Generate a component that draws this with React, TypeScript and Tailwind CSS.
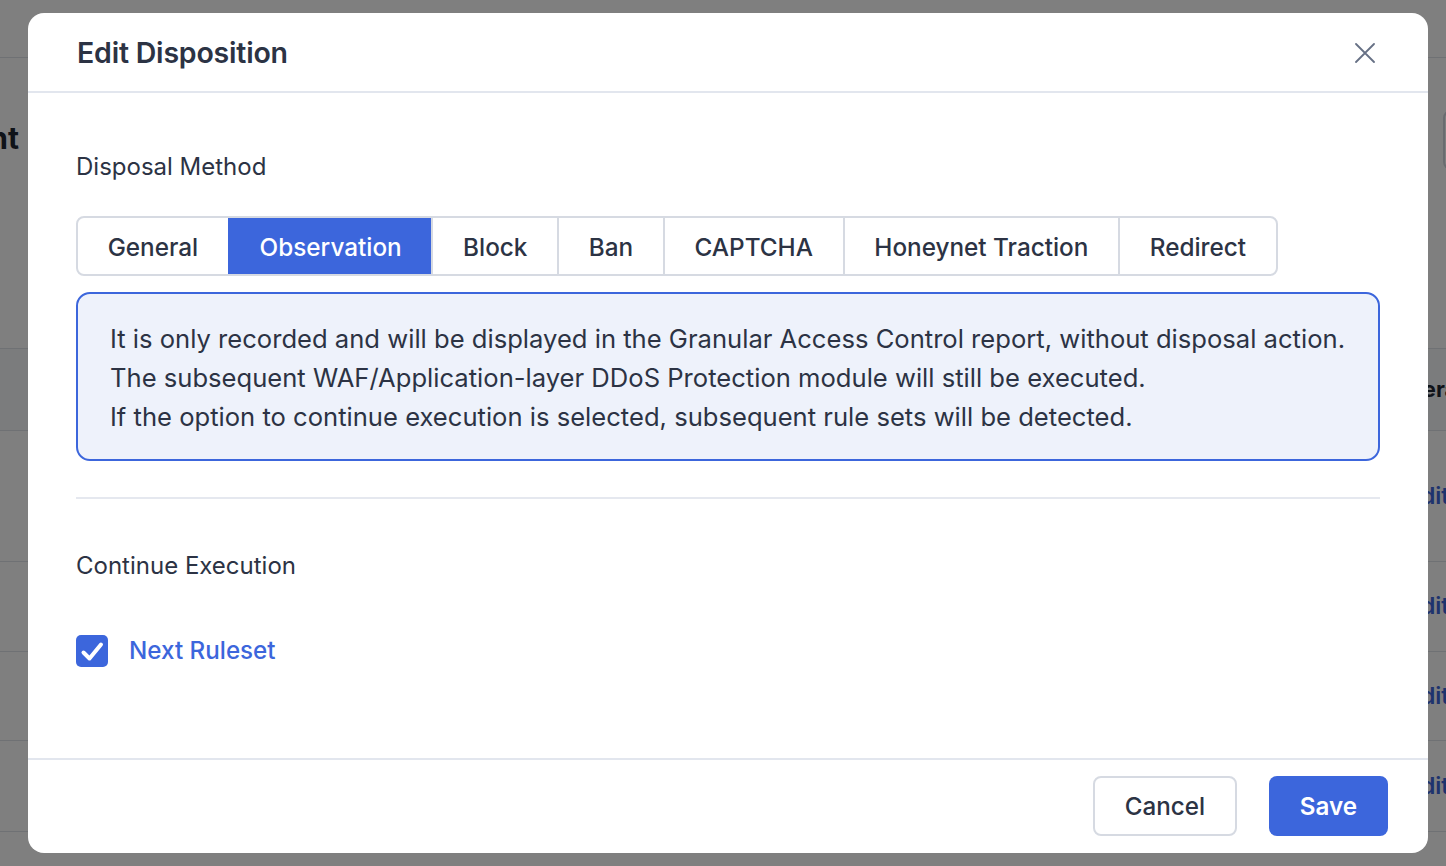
import React from "react";

const tabs = ["General", "Observation", "Block", "Ban", "CAPTCHA", "Honeynet Traction", "Redirect"];

function Background() {
  return (
    <div className="w-[1446px] h-[866px] overflow-hidden bg-white text-[#1f2633] whitespace-nowrap">
      <div className="h-[58px] border-b border-[#dfe2e8]" />
      <div className="h-[290px] flex items-start">
        <div className="mt-[60px] w-[19px] overflow-hidden flex justify-end">
          <span className="text-[30px] font-bold leading-[40px]">Rule Management</span>
        </div>
        <div className="ml-auto mt-[52px] mr-[-100px] w-[103px] h-[60px] rounded-[8px] border-2 border-[#d5d9e0]" />
      </div>
      <div className="flex flex-col">
        <div className="h-[83px] border-t border-b border-[#dfe2e8] bg-[#f7f8fa] flex items-center justify-end">
          <span className="w-[54px] text-[22px] font-bold">Operation</span>
        </div>
        {[131, 90, 89, 91].map((h, i) => (
          <div key={i} style={{ height: h }} className="border-b border-[#dfe2e8] flex items-center justify-end">
            <span className="w-[39px] text-[23px] font-semibold text-[#3c66dc]">Edit</span>
          </div>
        ))}
      </div>
    </div>
  );
}

export default function App() {
  return (
    <div className="relative w-[1446px] h-[866px] overflow-hidden" style={{ fontFamily: "Inter, 'Noto Sans', sans-serif" }}>
      <Background />
      <div className="absolute inset-0 bg-black/50" />
      <div className="absolute left-[28px] top-[13px] w-[1400px] h-[840px] bg-white rounded-[16px] flex flex-col text-[#2c3344]">
        <div className="h-[80px] shrink-0 border-b-2 border-[#e2e6ee] flex items-center justify-between pl-[49px] pr-[53px] pt-[3px]">
          <h2 className="text-[28.5px] font-semibold tracking-[-0.2px]">Edit Disposition</h2>
          <svg width="20" height="20" viewBox="0 0 20 20" className="text-[#667085] -mt-[2px]">
            <path d="M1 1 L19 19 M19 1 L1 19" stroke="currentColor" strokeWidth="1.8" strokeLinecap="round" />
          </svg>
        </div>
        <div className="flex-1 px-[48px] pt-[58px]">
          <div className="text-[24px] leading-[32px]">Disposal Method</div>
          <div className="mt-[33px] flex">
            <div className="flex border-2 border-[#d6dae2] rounded-[8px] overflow-hidden h-[60px]">
              {tabs.map((t, i) => {
                const active = t === "Observation";
                return (
                  <div
                    key={t}
                    className={
                      "flex items-center px-[29.7px] pt-[3px] text-[24.3px] font-medium " +
                      (i > 0 ? "border-l-2 " : "") +
                      (active ? "bg-[#3c66dc] text-white border-[#3c66dc]" : "text-[#2c3344] border-[#d6dae2]")
                    }
                  >
                    {t}
                  </div>
                );
              })}
            </div>
          </div>
          <div className="mt-[16px] h-[169px] border-2 border-[#3c66dc] bg-[#eef2fb] rounded-[14px] pl-[32px] pt-[25px] text-[25.6px] leading-[39px] text-[#2c3344]">
            <div>It is only recorded and will be displayed in the Granular Access Control report, without disposal action.</div>
            <div>The subsequent WAF/Application-layer DDoS Protection module will still be executed.</div>
            <div>If the option to continue execution is selected, subsequent rule sets will be detected.</div>
          </div>
          <div className="mt-[36px] h-[2px] bg-[#e5e8ef]" />
          <div className="mt-[51px] text-[24px] leading-[32px]">Continue Execution</div>
          <div className="mt-[51px] flex items-center gap-[21px]">
            <div className="w-[32px] h-[32px] rounded-[5px] bg-[#3c66dc]">
              <svg width="32" height="32" viewBox="0 0 32 32">
                <path d="M7.5 17.5 L13.5 23.5 L25 9.5" stroke="white" strokeWidth="4" fill="none" strokeLinecap="round" strokeLinejoin="round" />
              </svg>
            </div>
            <span className="text-[24.2px] font-medium text-[#3c66dc]">Next Ruleset</span>
          </div>
        </div>
        <div className="h-[95px] shrink-0 border-t-2 border-[#e2e6ee] flex items-start justify-end gap-[32px] pt-[16px] pr-[40px]">
          <button className="w-[144px] h-[60px] pt-[3px] rounded-[8px] border-2 border-[#d6dae2] text-[24.2px] font-medium text-[#2c3344]">Cancel</button>
          <button className="w-[119px] h-[60px] pt-[3px] rounded-[8px] bg-[#3c66dc] text-[24.2px] font-semibold text-white">Save</button>
        </div>
      </div>
    </div>
  );
}
